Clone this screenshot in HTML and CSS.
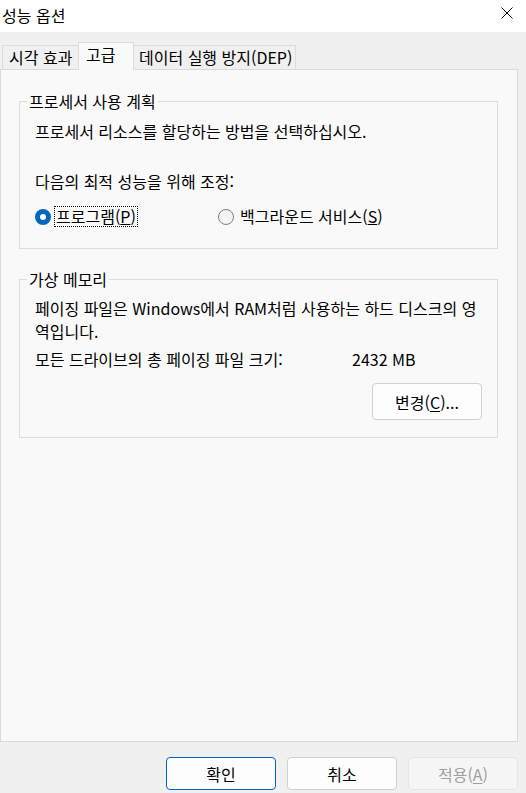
FILE: index.html
```html
<!DOCTYPE html>
<html lang="ko">
<head>
<meta charset="utf-8">
<title>성능 옵션</title>
<link rel="stylesheet" href="styles.css">
</head>
<body>
<div class="window">
  <header class="titlebar">
    <span class="title">성능 옵션</span>
    <span class="close" aria-label="닫기">
      <svg width="12" height="12" viewBox="0 0 12 12"><path d="M0.5 0.5 L11.5 11.5 M11.5 0.5 L0.5 11.5" stroke="#000" stroke-width="1" fill="none"/></svg>
    </span>
  </header>
  <div class="client">
    <div class="tabs">
      <div class="tab tab-visual">시각 효과</div>
      <div class="tab tab-adv active">고급</div>
      <div class="tab tab-dep">데이터 실행 방지(DEP)</div>
    </div>
    <div class="panel">
      <fieldset class="group group-cpu">
        <legend>프로세서 사용 계획</legend>
        <div class="group-body">
          <p class="line">프로세서 리소스를 할당하는 방법을 선택하십시오.</p>
          <p class="line line-adjust">다음의 최적 성능을 위해 조정:</p>
          <div class="radios">
            <label class="radio">
              <span class="dot on"></span>
              <span class="rlabel focus">프로그램(<u>P</u>)</span>
            </label>
            <label class="radio">
              <span class="dot"></span>
              <span class="rlabel">백그라운드 서비스(<u>S</u>)</span>
            </label>
          </div>
        </div>
      </fieldset>
      <fieldset class="group group-vm">
        <legend>가상 메모리</legend>
        <div class="group-body vm-body">
          <p class="line vm-line">페이징 파일은 Windows에서 RAM처럼 사용하는 하드 디스크의 영<br>역입니다.</p>
          <p class="line vm-line vm-size"><span class="vm-label">모든 드라이브의 총 페이징 파일 크기:</span><span>2432 MB</span></p>
          <div class="vm-actions">
            <button class="btn btn-change">변경(<u>C</u>)...</button>
          </div>
        </div>
      </fieldset>
    </div>
    <div class="buttons">
      <button class="btn btn-default">확인</button>
      <button class="btn">취소</button>
      <button class="btn btn-disabled">적용(<u>A</u>)</button>
    </div>
  </div>
</div>
</body>
</html>
```

FILE: styles.css
```css
* { box-sizing: border-box; }

html, body {
  margin: 0;
  padding: 0;
}

body {
  width: 526px;
  height: 793px;
  overflow: hidden;
  background: #f0f0f0;
  font-family: "Noto Sans CJK KR", "Noto Sans", sans-serif;
  font-size: 16px;
  color: #000;
}

.window {
  display: flex;
  flex-direction: column;
  height: 793px;
}

.titlebar {
  height: 32px;
  background: #fff;
  display: flex;
  align-items: center;
}

.title {
  padding-left: 2px;
  line-height: 20px;
  margin-top: -3px;
}

.close {
  margin-left: auto;
  margin-right: 13px;
  width: 12px;
  height: 12px;
  display: flex;
  margin-top: -6px;
}

.client {
  flex: 1;
  display: flex;
  flex-direction: column;
  background: #f0f0f0;
}

.tabs {
  margin-top: 10px;
  height: 27px;
  display: flex;
  align-items: flex-end;
  padding-left: 2px;
  position: relative;
  z-index: 1;
}

.tab {
  height: 24px;
  line-height: 22px;
  border: 1px solid #dcdcdc;
  border-bottom: none;
  background: #f0f0f0;
  white-space: nowrap;
}

.tab-visual {
  width: 76px;
  padding-left: 6px;
  border-right: none;
}

.tab-adv {
  width: 56px;
  padding-left: 7px;
}

.tab-dep {
  width: 162px;
  padding-left: 5px;
  border-left: none;
}

.tab.active {
  height: 28px;
  margin-bottom: -1px;
  background: #f9f9f9;
  line-height: 22px;
}

.panel {
  width: 518px;
  height: 673px;
  background: #f9f9f9;
  border: 1px solid #dadada;
  padding: 0 19px 0 18px;
}

.group {
  margin: 0;
  padding: 0;
  min-width: 0;
  border: 1px solid #dcdcdc;
}

.group legend {
  margin-left: 7px;
  padding: 0 2px;
  line-height: 20px;
}

.group-cpu { margin-top: 21px; }
.group-vm { margin-top: 20px; }

.group-body {
  padding: 10px 15px 22px 15px;
}

.line {
  margin: 0;
  line-height: 20px;
  white-space: nowrap;
}

.line-adjust { margin-top: 30px; }

.radios {
  margin-top: 15px;
  display: grid;
  grid-template-columns: 183px auto;
  height: 20px;
}

.radio {
  display: flex;
  align-items: center;
}

.dot {
  width: 16px;
  height: 16px;
  border-radius: 50%;
  border: 1px solid #808080;
  background: #f4f4f4;
  flex: none;
}

.dot.on {
  border: 5px solid #0067c0;
  background: #fff;
}

.rlabel {
  margin-left: 4px;
  line-height: 19px;
  padding: 0 1px;
  border: 1px solid transparent;
}

.rlabel.focus {
  margin-left: 3px;
  border: 1px dotted #000;
}

.vm-body {
  padding: 8px 15px 17px 15px;
}

.vm-line { line-height: 23px; }

.vm-size {
  margin-top: 5px;
  display: flex;
}

.vm-label { width: 317px; }

.vm-actions {
  margin-top: 12px;
  display: flex;
  justify-content: flex-end;
}

.btn {
  font-family: inherit;
  font-size: 16px;
  color: #000;
  background: #fdfdfd;
  border: 1px solid #d0d0d0;
  border-radius: 4px;
  padding: 0;
  line-height: 20px;
}

.btn u { text-underline-offset: 2px; }

.btn-change {
  width: 110px;
  height: 37px;
}

.buttons {
  margin-top: 15px;
  display: flex;
  justify-content: flex-end;
  gap: 11px;
  padding-right: 8px;
}

.buttons .btn {
  width: 110px;
  height: 33px;
}

.btn-default {
  border-color: #0067c0;
}

.btn-disabled {
  background: #f5f5f5;
  border-color: #e5e5e5;
  color: #a0a0a0;
}
```
